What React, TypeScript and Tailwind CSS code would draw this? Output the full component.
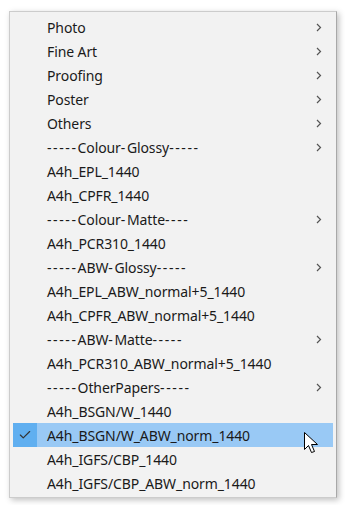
import { Check } from "lucide-react";

type Item = { label: string; sub?: boolean; selected?: boolean };

const items: Item[] = [
  { label: "Photo", sub: true },
  { label: "Fine Art", sub: true },
  { label: "Proofing", sub: true },
  { label: "Poster", sub: true },
  { label: "Others", sub: true },
  { label: "-----Colour-Glossy-----", sub: true },
  { label: "A4h_EPL_1440" },
  { label: "A4h_CPFR_1440" },
  { label: "-----Colour-Matte----", sub: true },
  { label: "A4h_PCR310_1440" },
  { label: "-----ABW-Glossy-----", sub: true },
  { label: "A4h_EPL_ABW_normal+5_1440" },
  { label: "A4h_CPFR_ABW_normal+5_1440" },
  { label: "-----ABW-Matte-----", sub: true },
  { label: "A4h_PCR310_ABW_normal+5_1440" },
  { label: "-----OtherPapers-----", sub: true },
  { label: "A4h_BSGN/W_1440" },
  { label: "A4h_BSGN/W_ABW_norm_1440", selected: true },
  { label: "A4h_IGFS/CBP_1440" },
  { label: "A4h_IGFS/CBP_ABW_norm_1440" },
];

// hyphens in the original font are wider, so spread them a bit
function Label({ text }: { text: string }) {
  const parts = text.split(/(-+)/).filter(Boolean);
  return (
    <>
      {parts.map((p, i) =>
        p.startsWith("-") ? (
          <span key={i} className="tracking-[1.6px]">
            {p}
          </span>
        ) : (
          <span key={i}>{p}</span>
        )
      )}
    </>
  );
}

function Chevron() {
  return (
    <svg width="6" height="9" viewBox="0 0 6 9" className="shrink-0">
      <path d="M1 1 L4.5 4.5 L1 8" fill="none" stroke="#555" strokeWidth="1.2" />
    </svg>
  );
}

function Cursor() {
  return (
    <svg width="16" height="25" viewBox="0 0 16 25" className="absolute left-[291px] top-[9px]">
      <path
        d="M0.5 0.5 L0.5 17.5 L4.5 13.5 L7.5 20.5 L10.5 19.5 L7.5 12.5 L13.5 12.5 Z"
        fill="#fff"
        stroke="#000"
        strokeWidth="1"
      />
    </svg>
  );
}

export default function App() {
  return (
    <div className="w-[345px] h-[505px] bg-white pt-[11px] pl-[9px]" style={{ fontFamily: '"Noto Sans", "Open Sans", sans-serif' }}>
      <div className="w-[328px] h-[487px] bg-[#f2f2f2] border border-[#cccccc] border-r-[#a8a8a8] py-[3px] px-[3px] shadow-[2px_2px_6px_rgba(0,0,0,0.25)]">
        {items.map((it) => (
          <div
            key={it.label}
            className={`relative flex items-center h-[24px] text-[14px] text-[#1a1a1a] ${
              it.selected ? "bg-[#99c9f5]" : ""
            }`}
          >
            <div className={`w-[24px] h-full flex items-center justify-center ${it.selected ? "bg-[#60aff0]" : ""}`}>
              {it.selected && <Check size={14} strokeWidth={2} color="#333" />}
            </div>
            <span className="flex-1 pl-[10px] whitespace-nowrap tracking-[-0.1px]">
              <Label text={it.label} />
            </span>
            <div className="w-[24px] flex items-center justify-start pl-[7px]">{it.sub && <Chevron />}</div>
            {it.selected && <Cursor />}
          </div>
        ))}
      </div>
    </div>
  );
}
